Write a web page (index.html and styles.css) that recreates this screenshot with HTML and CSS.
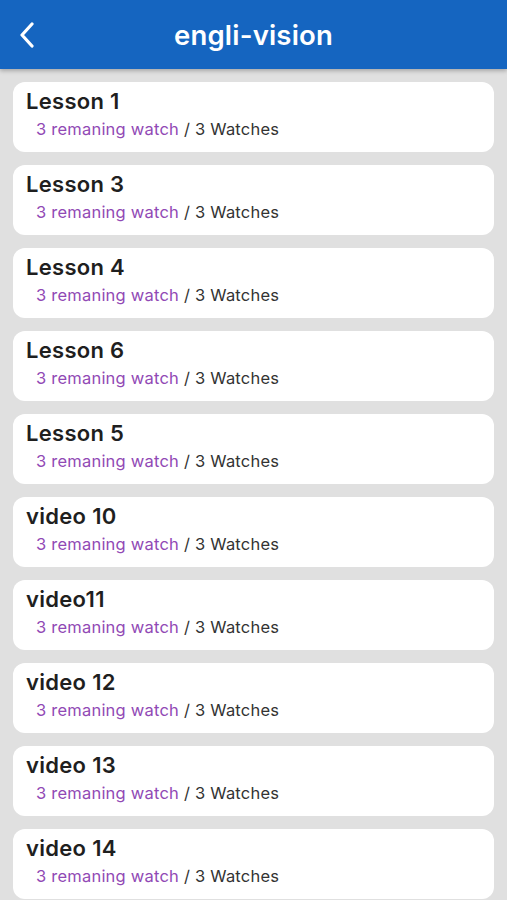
FILE: index.html
```html
<!DOCTYPE html>
<html>
<head>
<meta charset="utf-8">
<link rel="stylesheet" href="styles.css">
</head>
<body>
<header class="appbar">
  <button class="back" aria-label="Back">
    <svg width="18" height="26" viewBox="0 0 18 26"><path d="M14 2 L4 13 L14 24" fill="none" stroke="#fff" stroke-width="3.2" stroke-linecap="round" stroke-linejoin="round"/></svg>
  </button>
  <h1 class="title">engli-vision</h1>
</header>
<main class="list">
  <div class="card"><div class="card-title">Lesson 1</div><div class="card-sub"><span class="remain">3 remaning watch</span> / 3 Watches</div></div>
  <div class="card"><div class="card-title">Lesson 3</div><div class="card-sub"><span class="remain">3 remaning watch</span> / 3 Watches</div></div>
  <div class="card"><div class="card-title">Lesson 4</div><div class="card-sub"><span class="remain">3 remaning watch</span> / 3 Watches</div></div>
  <div class="card"><div class="card-title">Lesson 6</div><div class="card-sub"><span class="remain">3 remaning watch</span> / 3 Watches</div></div>
  <div class="card"><div class="card-title">Lesson 5</div><div class="card-sub"><span class="remain">3 remaning watch</span> / 3 Watches</div></div>
  <div class="card"><div class="card-title">video 10</div><div class="card-sub"><span class="remain">3 remaning watch</span> / 3 Watches</div></div>
  <div class="card"><div class="card-title">video11</div><div class="card-sub"><span class="remain">3 remaning watch</span> / 3 Watches</div></div>
  <div class="card"><div class="card-title">video 12</div><div class="card-sub"><span class="remain">3 remaning watch</span> / 3 Watches</div></div>
  <div class="card"><div class="card-title">video 13</div><div class="card-sub"><span class="remain">3 remaning watch</span> / 3 Watches</div></div>
  <div class="card"><div class="card-title">video 14</div><div class="card-sub"><span class="remain">3 remaning watch</span> / 3 Watches</div></div>
</main>
</body>
</html>
```
FILE: styles.css
```css
html, body {
  margin: 0;
  padding: 0;
  height: 100%;
  overflow: hidden;
}
body {
  background: #e0e0e0;
  font-family: Inter, "Noto Sans", sans-serif;
}
.appbar {
  height: 69px;
  background: #1565c0;
  display: flex;
  align-items: center;
  justify-content: center;
  position: relative;
  box-shadow: 0 2px 4px rgba(0,0,0,0.25);
  z-index: 1;
}
.back {
  position: absolute;
  left: 18px;
  top: 22px;
  background: none;
  border: none;
  padding: 0;
  display: flex;
}
.title {
  margin: 0;
  color: #fff;
  font-size: 27.5px;
  font-weight: 600;
  letter-spacing: 0.2px;
}
.list {
  display: flex;
  flex-direction: column;
  gap: 13px;
  padding: 13px 13px 0 13px;
}
.card {
  background: #fff;
  border-radius: 12px;
  height: 70px;
  box-sizing: border-box;
  padding: 6px 13px 0 13px;
  flex-shrink: 0;
}
.card-title {
  font-size: 22px;
  font-weight: 600;
  color: #1f1f1f;
  line-height: 26px;
  letter-spacing: 0.3px;
}
.card-sub {
  font-size: 16.5px;
  color: #333;
  line-height: 22px;
  margin-top: 4px;
  padding-left: 10px;
  letter-spacing: 0.22px;
}
.remain {
  color: #9149b5;
}
```
